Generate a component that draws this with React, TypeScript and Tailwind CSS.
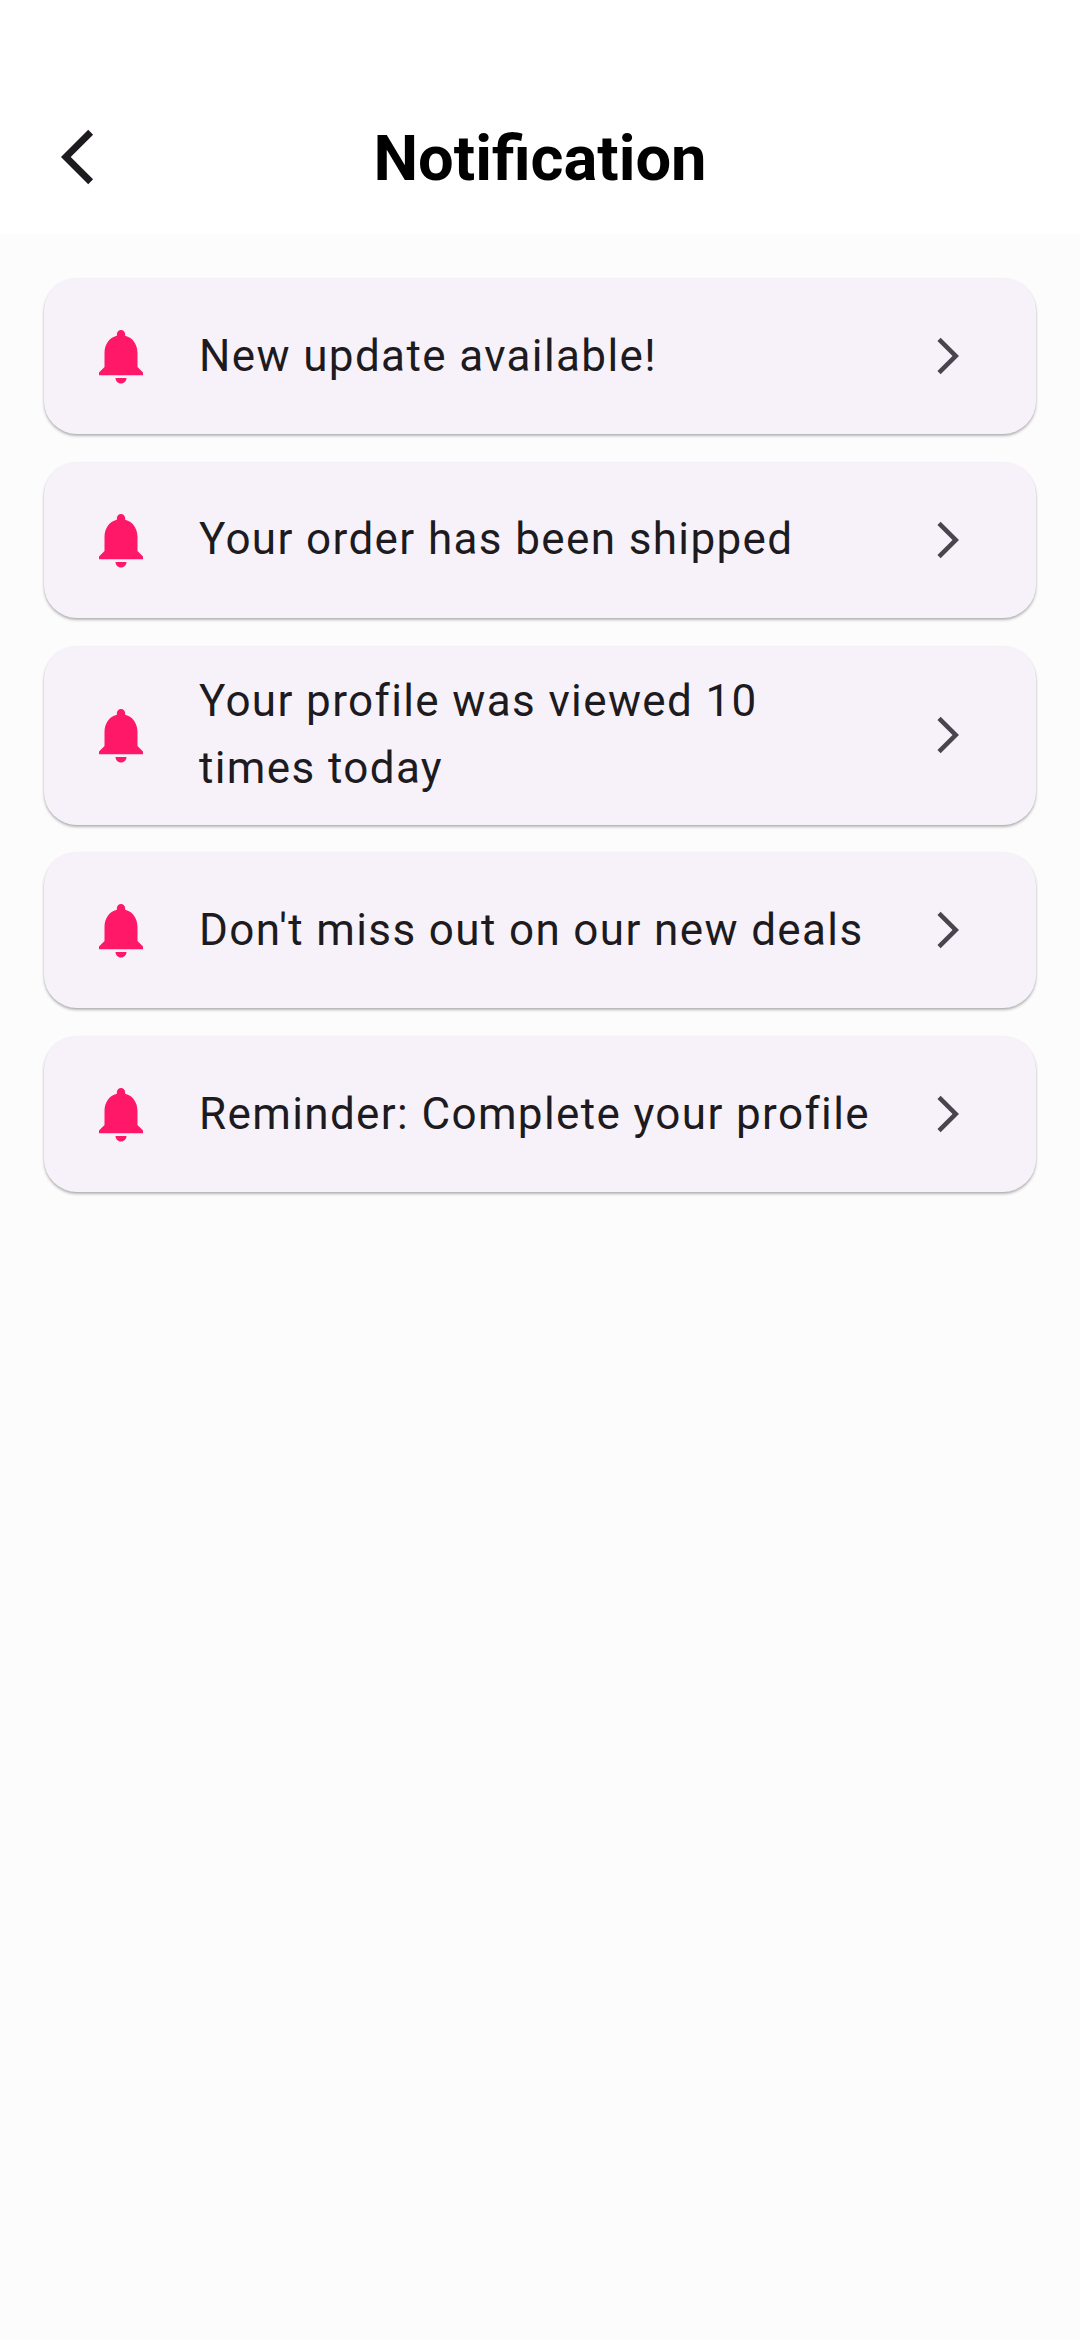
const notifications = [
  "New update available!",
  "Your order has been shipped",
  "Your profile was viewed 10 times today",
  "Don't miss out on our new deals",
  "Reminder: Complete your profile",
];

function BackIcon() {
  return (
    <svg viewBox="0 0 24 24" className="size-[66px] fill-[#1d1b20]" aria-hidden="true">
      <path d="M11.67 3.87 9.9 2.1 0 12l9.9 9.9 1.77-1.77L3.54 12z" />
    </svg>
  );
}

function BellIcon() {
  return (
    <svg viewBox="0 0 24 24" className="size-[66px] shrink-0 fill-[#ff1868]" aria-hidden="true">
      <path d="M12 22c1.1 0 2-.9 2-2h-4c0 1.1.89 2 2 2zm6-6v-5c0-3.07-1.64-5.64-4.5-6.32V4c0-.83-.67-1.5-1.5-1.5s-1.5.67-1.5 1.5v.68C7.63 5.36 6 7.92 6 11v5l-2 2v1h16v-1l-2-2z" />
    </svg>
  );
}

function ForwardIcon() {
  return (
    <svg viewBox="0 0 24 24" className="size-11 shrink-0 fill-[#49454f]" aria-hidden="true">
      <path d="M6.23 20.23 8 22l10-10L8 2 6.23 3.77 14.46 12z" />
    </svg>
  );
}

function NotificationCard({ text }: { text: string }) {
  return (
    <li className="flex min-h-[156.25px] items-center rounded-[33px] bg-[#f7f2fa] py-[22.6px] pr-[66px] pl-11 shadow-[0_2px_3px_rgba(0,0,0,0.26),0_1px_2px_rgba(0,0,0,0.08)]">
      <BellIcon />
      <p className="ml-[45px] flex-1 pr-[43px] text-[44px] leading-[67px] tracking-[1.375px] text-[#1d1b20]">
        {text}
      </p>
      <ForwardIcon />
    </li>
  );
}

export default function App() {
  return (
    <div className="min-h-[2340px] w-[1080px] bg-[#fcfcfc] font-[Roboto,sans-serif]">
      <header className="grid h-[234px] grid-cols-[1fr_auto_1fr] items-center bg-white pt-20 pl-[61px] pr-[61px]">
        <button type="button" aria-label="Back" className="justify-self-start">
          <BackIcon />
        </button>
        <h1 className="mt-0.5 text-[63.25px] leading-[76px] font-bold text-black">Notification</h1>
      </header>
      <ul className="flex flex-col gap-[27.5px] p-11">
        {notifications.map((text) => (
          <NotificationCard key={text} text={text} />
        ))}
      </ul>
    </div>
  );
}
